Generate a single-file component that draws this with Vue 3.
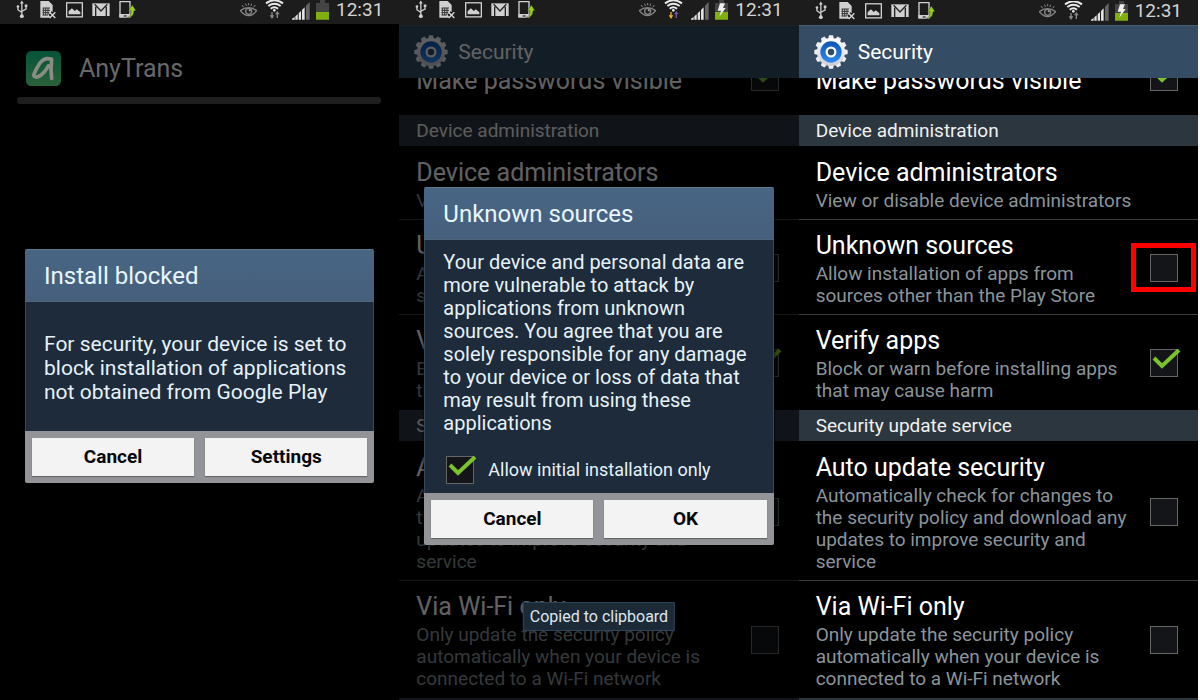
<script setup>
import { ref } from 'vue'

const settings = [
  { kind: 'item', id: 'passwords', title: 'Make passwords visible', box: true, on: true, single: true },
  { kind: 'section', id: 'admin', title: 'Device administration' },
  { kind: 'item', id: 'admins', title: 'Device administrators', summary: 'View or disable device administrators' },
  { kind: 'item', id: 'unknown', title: 'Unknown sources', summary: 'Allow installation of apps from sources other than the Play Store', box: true, on: false, line: true },
  { kind: 'item', id: 'verify', title: 'Verify apps', summary: 'Block or warn before installing apps that may cause harm', box: true, on: true, line: true },
  { kind: 'section', id: 'update', title: 'Security update service' },
  { kind: 'item', id: 'auto', title: 'Auto update security', summary: 'Automatically check for changes to the security policy and download any updates to improve security and service', box: true, on: false },
  { kind: 'item', id: 'wifi', title: 'Via Wi-Fi only', summary: 'Only update the security policy automatically when your device is connected to a Wi-Fi network', box: true, on: false, line: true },
  { kind: 'section', id: 'more', title: '' },
]

const phones = ref([
  { id: 'install', charging: false, data: false, rows: [] },
  { id: 'confirm', charging: true, data: true, rows: settings.map((r) => ({ ...r })) },
  { id: 'security', charging: true, data: false, rows: settings.map((r) => ({ ...r })), marked: 'unknown' },
])
const initialOnly = ref(true)
const teeth = Array.from({ length: 12 }, (_, i) => i * 30)
</script>

<template>
  <main class="board">
    <section v-for="p in phones" :key="p.id" class="phone" :class="p.id">
      <header class="status">
        <svg class="usb" viewBox="0 0 37 60" width="12" height="20" fill="none" stroke="#d0d0d0" stroke-width="4">
          <path d="M18 8V46M6 20V29L18 38M31 18V27L18 34" />
          <path d="M18 1L24 10H12Z" fill="#d0d0d0" stroke="none" />
          <circle cx="18" cy="49" r="6" fill="#d0d0d0" stroke="none" />
          <circle cx="6" cy="19" r="4" fill="#d0d0d0" stroke="none" />
          <path d="M27 13h8v8h-8z" fill="#d0d0d0" stroke="none" />
        </svg>
        <svg class="sim" viewBox="0 0 48 60" width="16" height="20">
          <path d="M1 3H26L38 15V36L34 34L26 44L32 53H1Z" fill="#d0d0d0" />
          <path d="M8 24h22M8 31h22M8 38h20M8 45h16M10 24v22M17 24v22M24 24v20" stroke="#333" stroke-width="3" />
          <path d="M29 37L46 54M46 37L29 54" stroke="#d8d8d8" stroke-width="4" />
        </svg>
        <svg class="pic" viewBox="0 0 52 60" width="17" height="20">
          <rect x="2" y="8" width="48" height="43" fill="none" stroke="#d0d0d0" stroke-width="4" />
          <path d="M8 43V34L18 25L27 33L33 28L44 37V43Z" fill="#d0d0d0" />
        </svg>
        <svg class="mail" viewBox="0 0 54 60" width="18" height="20">
          <rect x="1" y="10" width="52" height="38" fill="#d0d0d0" />
          <path d="M8 13L27 33L46 13M11 20V48M43 20V48" fill="none" stroke="#262626" stroke-width="4" />
        </svg>
        <svg class="dev" viewBox="0 0 51 60" width="17" height="20">
          <path d="M3 5H33V50H3Z" fill="none" stroke="#d0d0d0" stroke-width="4" />
          <path d="M1 42H34V53H1Z" fill="#d0d0d0" />
          <path d="M14 46h9v4h-9z" fill="#333" />
          <path d="M25 53Q37 48 36 32H28L40 15L51 32H45Q45 51 25 53Z" fill="#96cf1c" stroke="#222" stroke-width="1" />
        </svg>
        <span class="fill"></span>
        <svg class="eye" viewBox="0 0 51 60" width="17" height="20" fill="none" stroke="#858585" stroke-width="4">
          <path d="M1 32Q25 14 50 32Q25 62 1 32Z" />
          <circle cx="26" cy="34" r="9" />
          <circle cx="29" cy="31" r="3" fill="#aaa" stroke="none" />
          <path d="M6 15L11 22M17 11L19 18M26 9V16M35 11L33 18M46 15L41 22" stroke-width="3" />
        </svg>
        <svg class="wifi" viewBox="0 0 57 60" width="19" height="20" fill="none" stroke="#e8e8e8" stroke-width="6">
          <path d="M3 10Q28 -8 54 10M10 18Q28 5 47 18M17 26Q28 17 39 26" />
          <circle cx="28" cy="31" r="4" fill="#e8e8e8" stroke="none" />
          <path d="M21 36V48" :stroke="p.data ? '#e8b020' : '#8a8a8a'" stroke-width="4" />
          <path d="M14 46H28L21 57Z" :fill="p.data ? '#e8b020' : '#8a8a8a'" stroke="none" />
          <path d="M37 42V54" :stroke="p.data ? '#6a5a9a' : '#8a8a8a'" stroke-width="4" />
          <path d="M30 43L37 33L44 43Z" :fill="p.data ? '#6a5a9a' : '#8a8a8a'" stroke="none" />
        </svg>
        <svg class="signal" viewBox="0 0 54 60" width="18" height="20">
          <path d="M0 59V56L8 51V59ZM10 59V49L17 43V59ZM20 59V40L27 33V59ZM30 59V30L38 22V59Z" fill="#e2e2e2" />
          <path d="M42 59V17L53 6V59Z" fill="#666" />
        </svg>
        <svg class="battery" viewBox="0 0 39 60" width="13" height="20">
          <path d="M12 0H27V9H39V59H0V9H12Z" fill="#444" />
          <rect y="36" width="39" height="23" fill="#7fb010" />
          <path v-if="p.charging" d="M15 10H30L24 24H32L13 50L18 32H8Z" fill="#eee" />
        </svg>
        <time class="clock">12:31</time>
      </header>

      <div v-if="p.id === 'install'" class="app">
        <div class="app-head">
          <svg viewBox="0 0 105 105" width="35" height="35">
            <defs>
              <linearGradient id="green" x1="0" y1="0" x2="0" y2="1">
                <stop offset="0" stop-color="#055338" />
                <stop offset="1" stop-color="#2a6238" />
              </linearGradient>
            </defs>
            <rect width="105" height="105" rx="16" fill="url(#green)" />
            <path d="M77 82Q73 55 77 25Q56 17 42 36Q28 57 23 73Q28 83 43 74Q58 63 67 45" fill="none" stroke="#8b8d84" stroke-width="11" stroke-linejoin="round" stroke-linecap="round" />
          </svg>
          <h1>AnyTrans</h1>
        </div>
        <div class="track"></div>
      </div>

      <template v-else>
        <div class="bar">
          <svg viewBox="-51 -51 102 102" width="34" height="34">
            <defs>
              <linearGradient :id="'steel-' + p.id" x1="0" y1="0" x2="0" y2="1">
                <stop offset="0" stop-color="#ffffff" />
                <stop offset="1" stop-color="#cdcdd6" />
              </linearGradient>
              <linearGradient :id="'blue-' + p.id" x1="0" y1="0" x2="0" y2="1">
                <stop offset="0" stop-color="#0d54b4" />
                <stop offset="1" stop-color="#2f8cf0" />
              </linearGradient>
            </defs>
            <path v-for="t in teeth" :key="t" d="M-9 -38L-6 -50H6L9 -38Z" fill="#f0f0f4" :transform="`rotate(${t})`" />
            <circle r="42" :fill="`url(#steel-${p.id})`" />
            <circle r="32" :fill="`url(#blue-${p.id})`" />
            <circle r="13" fill="#344a60" stroke="#f4f6fa" stroke-width="7" />
          </svg>
          <h1>Security</h1>
        </div>
        <div class="list">
          <template v-for="r in p.rows" :key="r.id">
            <h2 v-if="r.kind === 'section'" class="section">{{ r.title }}</h2>
            <div v-else class="row" :class="{ line: r.line, single: r.single }">
              <label class="words" :for="p.id + r.id">
                <span class="title">{{ r.title }}</span>
                <span v-if="r.summary" class="summary">{{ r.summary }}</span>
              </label>
              <span v-if="r.box" class="tick">
                <input :id="p.id + r.id" v-model="r.on" type="checkbox" />
                <svg v-if="r.on" viewBox="0 0 32 28" width="32" height="28"><path d="M4 9L12 17L29 1" /></svg>
                <span v-if="p.marked === r.id" class="mark"></span>
              </span>
            </div>
          </template>
        </div>
      </template>

      <div v-if="p.id === 'install'" class="shade">
        <div class="dialog" role="dialog" aria-label="Install blocked">
          <h2>Install blocked</h2>
          <div class="body short">
            <p>For security, your device is set to block installation of applications not obtained from Google Play</p>
          </div>
          <div class="actions">
            <button type="button">Cancel</button>
            <button type="button">Settings</button>
          </div>
        </div>
      </div>

      <div v-if="p.id === 'confirm'" class="shade dim">
        <div class="dialog" role="dialog" aria-label="Unknown sources">
          <h2>Unknown sources</h2>
          <div class="body">
            <p>Your device and personal data are more vulnerable to attack by applications from unknown sources. You agree that you are solely responsible for any damage to your device or loss of data that may result from using these applications</p>
            <div class="option">
              <span class="tick">
                <input id="initial" v-model="initialOnly" type="checkbox" />
                <svg v-if="initialOnly" viewBox="0 0 32 28" width="32" height="28"><path d="M4 9L12 17L29 1" /></svg>
              </span>
              <label for="initial">Allow initial installation only</label>
            </div>
          </div>
          <div class="actions">
            <button type="button">Cancel</button>
            <button type="button">OK</button>
          </div>
        </div>
        <div class="toast" role="status">Copied to clipboard</div>
      </div>
    </section>
  </main>
</template>

<style>
body {
  margin: 0;
  background: #fff;
}
</style>

<style scoped>
.board {
  display: grid;
  grid-template-columns: repeat(3, 1fr);
  height: 100vh;
  padding-right: 2px;
  box-sizing: border-box;
  font-family: Roboto, "Liberation Sans", sans-serif;
}
h1, h2, p {
  margin: 0;
  font-weight: 400;
}
.phone {
  position: relative;
  display: flex;
  flex-direction: column;
  min-width: 0;
  min-height: 0;
  overflow: hidden;
  background: #000;
}
.status {
  position: relative;
  z-index: 2;
  display: flex;
  flex: none;
  height: 24px;
  padding: 0 16px;
  background: #1c1c1c;
}
.confirm .status {
  height: 25px;
  box-sizing: border-box;
}
.security .status {
  height: 25px;
  padding-top: 1px;
  box-sizing: border-box;
}
.status svg { flex: none; }
.sim { margin-left: 12px; }
.pic { margin-left: 10px; }
.mail, .dev { margin-left: 9px; }
.fill { flex: 1; }
.wifi, .signal { margin-left: 8px; }
.battery { margin-left: 6px; }
.clock {
  margin-left: 7px;
  font-size: 19px;
  line-height: 20px;
  color: #d4d4d4;
}
.app { padding: 27px 18px 0 17px; }
.app-head {
  display: flex;
  align-items: center;
  gap: 18px;
  padding-left: 9px;
}
.app-head h1 {
  font-size: 25px;
  line-height: 35px;
  color: #686868;
}
.track {
  height: 7px;
  margin-top: 11px;
  border-radius: 3px;
  background: #1e1e1e;
}
.bar {
  position: relative;
  z-index: 1;
  display: flex;
  flex: none;
  align-items: center;
  gap: 10px;
  height: 53px;
  padding-left: 15px;
  box-sizing: border-box;
  border-top: 1px solid #465e72;
  background: #344c64;
}
.bar h1 {
  font-size: 21px;
  line-height: 28px;
  color: #fff;
}
.list {
  flex: 1;
  min-height: 0;
  overflow: hidden;
}
.section {
  height: 32px;
  padding-left: 17px;
  box-sizing: border-box;
  border-top: 1px solid #000;
  background: #2c363f;
  font-size: 19px;
  line-height: 32px;
  color: #f0f0f0;
}
.row {
  display: flex;
  align-items: center;
  gap: 16px;
  padding: 9px 20px 7px 17px;
  background: #000;
}
.row.line { box-shadow: inset 0 1px #3c3c3c; }
.row.single {
  align-items: flex-start;
  margin-top: -32px;
  padding-top: 17px;
  padding-bottom: 16px;
}
.words {
  flex: 1;
  min-width: 0;
}
.title {
  display: block;
  font-size: 25px;
  line-height: 35px;
  color: #fff;
}
.summary {
  display: block;
  font-size: 19px;
  line-height: 22px;
  color: #8b9499;
}
.tick {
  position: relative;
  flex: none;
  width: 28px;
  height: 28px;
}
.tick input {
  display: block;
  width: 28px;
  height: 28px;
  margin: 0;
  box-sizing: border-box;
  appearance: none;
  border: 1px solid #666;
  background: #141518;
}
.tick svg {
  position: absolute;
  top: 0;
  left: 0;
  pointer-events: none;
}
.tick path {
  fill: none;
  stroke: #7cc22c;
  stroke-width: 4;
}
.mark {
  position: absolute;
  inset: -11px -18px -10px -19px;
  border: 5px solid #fe0000;
  pointer-events: none;
}
.shade {
  position: absolute;
  inset: 0;
  z-index: 1;
  display: flex;
  flex-direction: column;
  justify-content: center;
  padding: 31px 25px 0;
}
.dim { background: rgba(0, 0, 0, 0.62); }
.dialog {
  border-radius: 2px;
  overflow: hidden;
  background: #1d2b3a;
  box-shadow: 0 0 3px #000;
}
.dialog h2 {
  height: 53px;
  padding-left: 19px;
  box-sizing: border-box;
  border-top: 1px solid #5b7a92;
  border-bottom: 1px solid #4f6577;
  background: linear-gradient(#476684, #465f7c);
  font-size: 24px;
  line-height: 53px;
  color: #e8f6ff;
}
.body {
  padding: 11px 14px 9px 18px;
  border: solid #34485a;
  border-width: 0 1px;
  color: #e6f2fa;
}
.body p {
  font-size: 20px;
  line-height: 23px;
}
.body.short { padding: 30px 14px 27px 18px; }
.body.short p {
  font-size: 21px;
  line-height: 24px;
}
.option {
  display: flex;
  align-items: center;
  gap: 14px;
  margin-top: 21px;
  padding-left: 3px;
  font-size: 18px;
}
.actions {
  display: grid;
  grid-template-columns: 1fr 1fr;
  gap: 11px;
  padding: 7px;
  background: #929497;
}
.actions button {
  height: 38px;
  padding: 0;
  border: 0;
  background: #f3f3f3;
  box-shadow: 0 1px 1px #666;
  font-family: inherit;
  font-size: 19px;
  font-weight: 700;
  color: #080808;
}
.toast {
  position: absolute;
  bottom: 69px;
  left: 50%;
  padding: 0 6px;
  transform: translateX(-50%);
  border: 1px solid #2d4357;
  background: #1c2a38;
  font-size: 16px;
  line-height: 27px;
  white-space: nowrap;
  color: #dde6ec;
}
</style>
